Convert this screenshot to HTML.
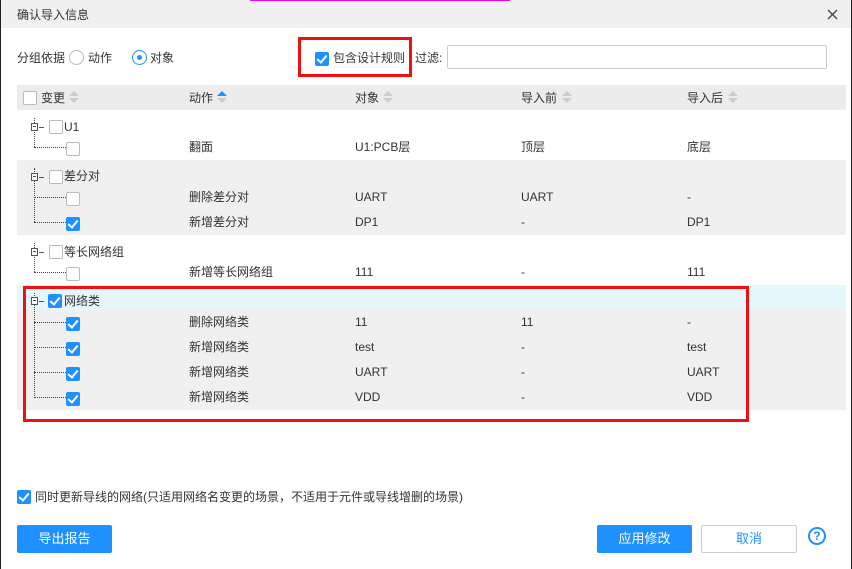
<!DOCTYPE html>
<html><head><meta charset="utf-8"><style>
*{box-sizing:border-box;margin:0;padding:0}
body{width:852px;height:569px;background:#fff;font-family:"Liberation Sans","Noto Sans CJK SC",sans-serif;font-size:12px;color:#333;position:relative;overflow:hidden}
.a{position:absolute}
.t{position:absolute;white-space:nowrap;line-height:14px}
.cb{position:absolute;width:14px;height:14px;border:1px solid #bbb;background:#fff;border-radius:2px}
.ck{position:absolute;width:14px;height:14px;background:#1e90ff;border-radius:2px}
.ck:after{content:"";position:absolute;left:4px;top:1px;width:4px;height:8px;border:solid #fff;border-width:0 2px 2px 0;transform:rotate(40deg)}
.tb{position:absolute;width:7px;height:8px;border:1px solid #555;background:#fff}
.tb:after{content:"";position:absolute;left:1px;top:2px;width:3px;height:1px;background:#555}
.vl{position:absolute;border-left:1px dotted #444;width:0}
.hl{position:absolute;border-top:1px dotted #444;height:0}
.so{position:absolute;width:0;height:0;border-left:5px solid transparent;border-right:5px solid transparent}
</style></head><body>
<div class="a" style="left:0;top:0;width:852px;height:28px;background:#f0f0f0"></div>
<div class="a" style="left:0;top:0;width:1px;height:569px;background:#222"></div>
<div class="a" style="left:851px;top:0;width:1px;height:569px;background:#222"></div>
<div class="a" style="left:250px;top:0;width:260px;height:1px;background:#e0e"></div>
<div class="t" style="left:17px;top:8px;font-size:12px">确认导入信息</div>
<svg class="a" style="left:827px;top:9px" width="11" height="11"><path d="M1 1L10 10M10 1L1 10" stroke="#444" stroke-width="1.3"/></svg>

<div class="t" style="left:17px;top:51px">分组依据</div>
<div class="a" style="left:69px;top:50px;width:15px;height:15px;border:1px solid #bbb;border-radius:50%"></div>
<div class="t" style="left:88px;top:51px">动作</div>
<div class="a" style="left:132px;top:50px;width:15px;height:15px;border:1px solid #1e90ff;border-radius:50%"></div>
<div class="a" style="left:137px;top:55px;width:5px;height:5px;background:#1e90ff;border-radius:50%"></div>
<div class="t" style="left:150px;top:51px">对象</div>
<div class="ck" style="left:315px;top:52px"></div>
<div class="t" style="left:333px;top:51px">包含设计规则</div>
<div class="a" style="left:298px;top:37px;width:114px;height:40px;border:3px solid #f01010"></div>
<div class="t" style="left:415px;top:51px">过滤:</div>
<div class="a" style="left:447px;top:45px;width:380px;height:24px;border:1px solid #ccc;border-radius:2px"></div>

<div class="a" style="left:17px;top:85px;width:829px;height:25px;background:#ececec"></div>
<div class="cb" style="left:23px;top:91px"></div>
<div class="t" style="left:41px;top:91px">变更</div>
<div class="so" style="left:69px;top:91px;border-bottom:5px solid #ccc"></div><div class="so" style="left:69px;top:98px;border-top:5px solid #ccc"></div>
<div class="t" style="left:189px;top:91px">动作</div>
<div class="so" style="left:217px;top:91px;border-bottom:5px solid #1e90ff"></div><div class="so" style="left:217px;top:98px;border-top:5px solid #ccc"></div>
<div class="t" style="left:355px;top:91px">对象</div>
<div class="so" style="left:383px;top:91px;border-bottom:5px solid #ccc"></div><div class="so" style="left:383px;top:98px;border-top:5px solid #ccc"></div>
<div class="t" style="left:521px;top:91px">导入前</div>
<div class="so" style="left:562px;top:91px;border-bottom:5px solid #ccc"></div><div class="so" style="left:562px;top:98px;border-top:5px solid #ccc"></div>
<div class="t" style="left:687px;top:91px">导入后</div>
<div class="so" style="left:728px;top:91px;border-bottom:5px solid #ccc"></div><div class="so" style="left:728px;top:98px;border-top:5px solid #ccc"></div>

<div class="a" style="left:17px;top:160px;width:829px;height:75px;background:#f0f0f0"></div>
<div class="a" style="left:17px;top:285px;width:829px;height:25px;background:#e6f6fd"></div>
<div class="a" style="left:17px;top:310px;width:829px;height:100px;background:#f0f0f0"></div>

<div class="vl" style="left:34px;top:118px;height:29px"></div><div class="hl" style="left:34px;top:147px;width:32px"></div>
<div class="tb" style="left:31px;top:123px"></div><div class="hl" style="left:39px;top:127px;width:5px;border-top:1px solid #555"></div>
<div class="cb" style="left:49px;top:120px"></div><div class="t" style="left:64px;top:120px">U1</div>
<div class="cb" style="left:66px;top:142px"></div>
<div class="t" style="left:189px;top:140px">翻面</div><div class="t" style="left:355px;top:140px">U1:PCB层</div><div class="t" style="left:521px;top:140px">顶层</div><div class="t" style="left:687px;top:140px">底层</div>

<div class="vl" style="left:34px;top:168px;height:54px"></div><div class="hl" style="left:34px;top:197px;width:32px"></div><div class="hl" style="left:34px;top:222px;width:32px"></div>
<div class="tb" style="left:31px;top:173px"></div><div class="hl" style="left:39px;top:177px;width:5px;border-top:1px solid #555"></div>
<div class="cb" style="left:49px;top:170px"></div><div class="t" style="left:64px;top:169px">差分对</div>
<div class="cb" style="left:66px;top:192px"></div><div class="ck" style="left:66px;top:217px"></div>
<div class="t" style="left:189px;top:190px">删除差分对</div><div class="t" style="left:355px;top:190px">UART</div><div class="t" style="left:521px;top:190px">UART</div><div class="t" style="left:687px;top:190px">-</div>
<div class="t" style="left:189px;top:215px">新增差分对</div><div class="t" style="left:355px;top:215px">DP1</div><div class="t" style="left:521px;top:215px">-</div><div class="t" style="left:687px;top:215px">DP1</div>

<div class="vl" style="left:34px;top:243px;height:29px"></div><div class="hl" style="left:34px;top:272px;width:32px"></div>
<div class="tb" style="left:31px;top:248px"></div><div class="hl" style="left:39px;top:252px;width:5px;border-top:1px solid #555"></div>
<div class="cb" style="left:49px;top:245px"></div><div class="t" style="left:64px;top:245px">等长网络组</div>
<div class="cb" style="left:66px;top:267px"></div>
<div class="t" style="left:189px;top:265px">新增等长网络组</div><div class="t" style="left:355px;top:265px">111</div><div class="t" style="left:521px;top:265px">-</div><div class="t" style="left:687px;top:265px">111</div>

<div class="vl" style="left:34px;top:293px;height:105px"></div>
<div class="hl" style="left:34px;top:322px;width:32px"></div><div class="hl" style="left:34px;top:347px;width:32px"></div><div class="hl" style="left:34px;top:372px;width:32px"></div><div class="hl" style="left:34px;top:397px;width:32px"></div>
<div class="tb" style="left:31px;top:297px"></div><div class="hl" style="left:39px;top:301px;width:5px;border-top:1px solid #555"></div>
<div class="ck" style="left:48px;top:294px"></div><div class="t" style="left:64px;top:294px">网络类</div>
<div class="ck" style="left:66px;top:317px"></div><div class="ck" style="left:66px;top:342px"></div><div class="ck" style="left:66px;top:367px"></div><div class="ck" style="left:66px;top:392px"></div>
<div class="t" style="left:189px;top:315px">删除网络类</div><div class="t" style="left:355px;top:315px">11</div><div class="t" style="left:521px;top:315px">11</div><div class="t" style="left:687px;top:315px">-</div>
<div class="t" style="left:189px;top:340px">新增网络类</div><div class="t" style="left:355px;top:340px">test</div><div class="t" style="left:521px;top:340px">-</div><div class="t" style="left:687px;top:340px">test</div>
<div class="t" style="left:189px;top:365px">新增网络类</div><div class="t" style="left:355px;top:365px">UART</div><div class="t" style="left:521px;top:365px">-</div><div class="t" style="left:687px;top:365px">UART</div>
<div class="t" style="left:189px;top:390px">新增网络类</div><div class="t" style="left:355px;top:390px">VDD</div><div class="t" style="left:521px;top:390px">-</div><div class="t" style="left:687px;top:390px">VDD</div>
<div class="a" style="left:23px;top:286px;width:726px;height:136px;border:3px solid #f01010"></div>

<div class="ck" style="left:17px;top:490px"></div>
<div class="t" style="left:35px;top:490px">同时更新导线的网络(只适用网络名变更的场景，不适用于元件或导线增删的场景)</div>

<div class="a" style="left:17px;top:525px;width:95px;height:28px;background:#1e90ff;border-radius:2px;color:#fff;text-align:center;line-height:28px;font-size:13px">导出报告</div>
<div class="a" style="left:597px;top:525px;width:95px;height:28px;background:#1e90ff;border-radius:2px;color:#fff;text-align:center;line-height:28px;font-size:13px">应用修改</div>
<div class="a" style="left:701px;top:525px;width:96px;height:28px;border:1px solid #ccc;border-radius:2px;color:#1e90ff;text-align:center;line-height:26px;font-size:13px">取消</div>
<div class="a" style="left:808px;top:527px;width:18px;height:18px;border:2px solid #1e90ff;border-radius:50%;color:#1e90ff;text-align:center;line-height:14px;font-size:12px;font-weight:bold">?</div>
</body></html>
